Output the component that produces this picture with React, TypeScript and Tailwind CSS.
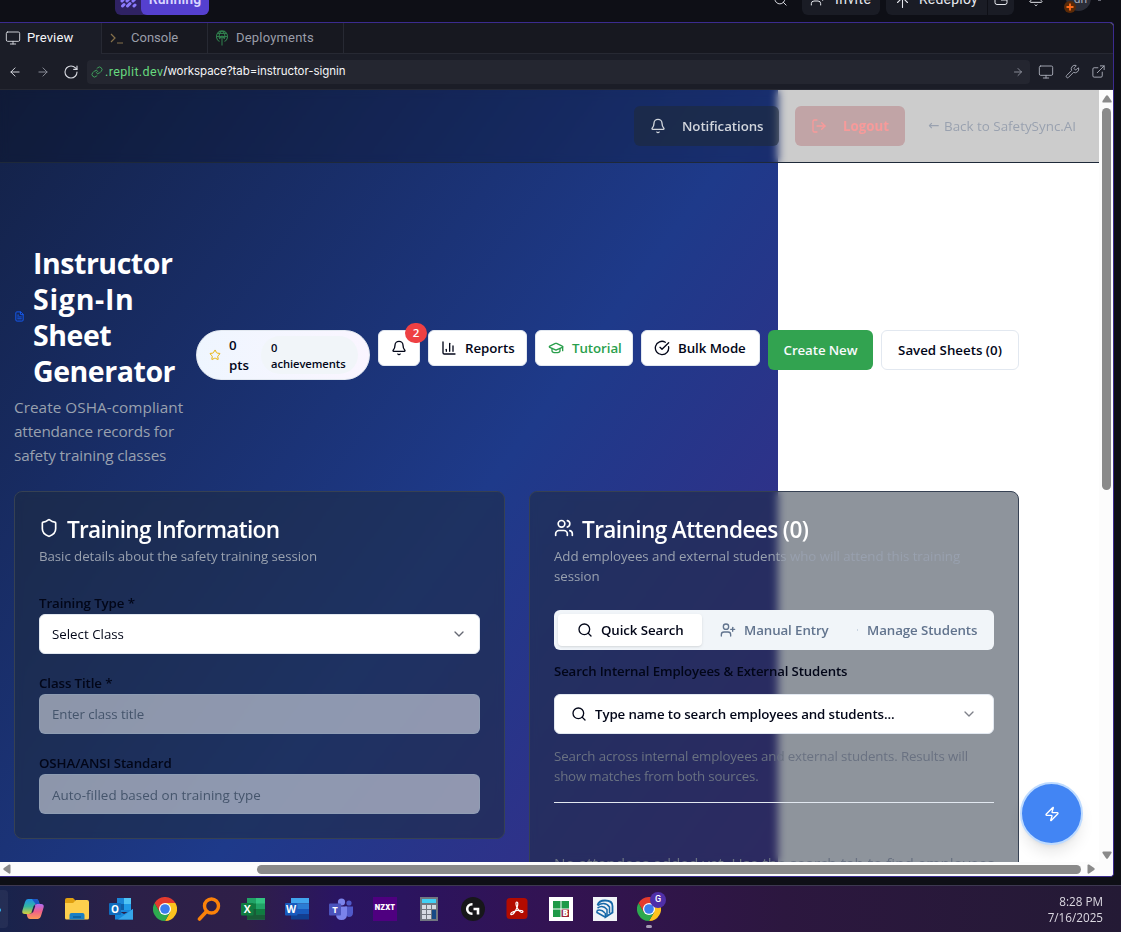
import React from "react";
import {
  ArrowLeft,
  ArrowRight,
  ArrowUp,
  Bell,
  ChartColumn,
  ChevronDown,
  CircleCheckBig,
  ExternalLink,
  FileText,
  GraduationCap,
  Link,
  LogOut,
  Monitor,
  RotateCw,
  Search,
  Shield,
  Star,
  UserPlus,
  Users,
  Wrench,
  Zap,
} from "lucide-react";

const BTN =
  "flex h-9 shrink-0 items-center rounded-md border border-slate-200 bg-white text-[13.3px] tracking-[-0.005em] font-semibold whitespace-nowrap";

function TopBar() {
  return (
    <div className="relative h-[22px] shrink-0 overflow-hidden bg-[#0e0f16] font-['Roboto',sans-serif] text-[14px] text-[#e6e8ee]">
      <div className="absolute top-[-17px] left-[115px] flex h-8 w-[94px] overflow-hidden rounded-md bg-[#2f2263]">
        <svg viewBox="0 0 26 32" className="h-8 w-[26px]">
          <g stroke="#8b7bff" strokeWidth="3" strokeLinecap="round">
            <path d="M7 18l1-1M12 18l2-2M18 18l2-2M7.500 23l1.500-1.500M12.500 23l2.500-2.500M19 23l1-1" />
          </g>
        </svg>
        <div className="flex flex-1 items-center justify-center rounded-l-md bg-[#5540cf] text-[14px] font-semibold tracking-[0.01em] text-[#d9d5ff]">
          Running
        </div>
      </div>
      <Search className="absolute top-[-8px] left-[773px] size-[15px]" strokeWidth={1.5} />
      <div className="absolute top-[-17px] left-[802px] flex h-8 w-[78px] items-center rounded-md bg-[#1a1c25] pl-2">
        <UserPlus className="size-4" strokeWidth={1.5} />
        <span className="ml-[9px] tracking-[0.03em]">Invite</span>
      </div>
      <div className="absolute top-[-17px] left-[886px] flex h-8 w-[101px] items-center rounded-l-md bg-[#1a1c25] pl-2">
        <ArrowUp className="relative top-[3px] size-[17px]" strokeWidth={1.5} />
        <span className="ml-2 tracking-[0.015em]">Redeploy</span>
      </div>
      <div className="absolute top-[-17px] left-[988px] flex h-8 w-[26px] items-center justify-center rounded-r-md bg-[#1a1c25]">
        <svg viewBox="0 0 14 14" className="size-[14px]" fill="none" stroke="currentColor">
          <rect x="1" y="1" width="12" height="11.5" rx="2" />
          <path d="M7 3v5h6" />
        </svg>
      </div>
      <Bell className="absolute top-[-9px] left-[1028px] size-4" strokeWidth={1.5} />
      <div className="absolute top-[-14px] left-[1066px] flex size-[25px] items-center justify-center rounded-full bg-[#2b2d38] text-[12px] text-[#a9acb8]">
        <span className="pl-1">dh</span>
      </div>
      <svg viewBox="0 0 12 12" className="absolute top-[1px] left-[1064px] size-3">
        <circle cx="6" cy="6" r="6" fill="#5a2a08" />
        <path d="M6 2.500v7M2.500 6h7" stroke="#ff6a1a" strokeWidth="1.800" />
      </svg>
      <div className="absolute top-[-1px] left-[1098px] h-[2px] w-[3px] bg-[#666873]" />
    </div>
  );
}

function DeployIcon() {
  return (
    <svg viewBox="0 0 14 16" className="h-4 w-[14px] text-[#2f7d4c]" fill="none" stroke="currentColor" strokeWidth="1.1">
      <path d="M4.500 11.500A5.600 5.600 0 1 1 9.500 11.500M4.800 9A6 6 0 0 1 7 1a6 6 0 0 1 2.200 8M1.500 6.500h11M2.500 3.500h9M7 6v9.500M4.500 8.500L7 6l2.500 2.500" />
    </svg>
  );
}

function BrowserChrome() {
  return (
    <div className="shrink-0 font-['Roboto',sans-serif]">
      <div className="flex h-[31px] bg-[#171820] text-[13px] text-[#9a9da8]">
        <div className="flex w-[102px] items-center border-r border-[#272933] bg-[#1b1d27] pb-px pl-[5px] text-[#f4f5f7]">
          <Monitor className="size-4 text-[#d5d7de]" strokeWidth={1.4} />
          <span className="ml-[6px] pb-px tracking-[0.01em]">Preview</span>
        </div>
        <div className="flex w-[106px] items-center border-r border-b border-[#272933] pl-2">
          <svg viewBox="0 0 14 12" className="h-3 w-[14px] text-[#86704a]" fill="none" stroke="currentColor" strokeWidth="1.2">
            <path d="M1 2l4 4-4 4M7 11h6" />
          </svg>
          <span className="ml-[7px]">Console</span>
        </div>
        <div className="flex w-[136px] items-center border-r border-b border-[#272933] pl-[7px]">
          <DeployIcon />
          <span className="ml-[7px] tracking-[0.015em]">Deployments</span>
        </div>
        <div className="flex-1 border-b border-[#272933]" />
      </div>
      <div className="flex h-[36px] items-center border-b border-[#272933] bg-[#1b1d27] pr-[7px] pl-2 text-[#d5d7de]">
        <ArrowLeft className="size-[14px]" strokeWidth={1.7} />
        <ArrowRight className="ml-[14px] size-[14px] text-[#8b8e99]" strokeWidth={1.7} />
        <RotateCw className="ml-[13px] size-4" strokeWidth={1.7} />
        <div className="ml-2 flex h-6 flex-1 items-center rounded bg-[#242630] pl-1 text-[12.5px]">
          <Link className="size-3 text-[#3f9f5c]" strokeWidth={2} />
          <span className="ml-[2px] pt-px tracking-[0.03em] text-[#67d97f]">.replit.dev</span>
          <span className="pt-px font-['Inter',sans-serif] text-[11.5px] tracking-[-0.005em] text-[#f4f5f7]">
            /workspace?tab=instructor-signin
          </span>
          <ArrowRight className="mr-[6px] ml-auto size-3 text-[#9a9da8]" strokeWidth={1.7} />
        </div>
        <Monitor className="ml-2 size-4 text-[#a9acb8]" strokeWidth={1.4} />
        <Wrench className="ml-[11px] size-[15px] text-[#a9acb8]" strokeWidth={1.5} />
        <ExternalLink className="ml-[11px] size-[15px] text-[#a9acb8]" strokeWidth={1.5} />
      </div>
    </div>
  );
}

function SiteHeader() {
  return (
    <div className="flex h-[73px] shrink-0 items-center border-b border-gray-800 bg-black/20 pl-[634px] backdrop-blur-[4px]">
      <div className="flex h-10 w-[145px] items-center rounded-md bg-gray-800/60 pl-4 text-[13.3px] font-semibold text-gray-300">
        <Bell className="size-4" />
        <span className="ml-4 pt-px tracking-[-0.005em]">Notifications</span>
      </div>
      <div className="ml-4 flex h-10 w-[110px] items-center rounded-md bg-[#c1a4a6] pl-4 text-[13.3px] font-bold text-[#f79a9a]">
        <LogOut className="size-4" />
        <span className="ml-4 pt-px">Logout</span>
      </div>
      <div className="ml-[23px] flex items-center pt-px text-[13.4px] whitespace-nowrap text-gray-400">
        <span className="w-4 font-['DejaVu_Sans',sans-serif]">←</span>
        <span>Back to SafetySync.AI</span>
      </div>
    </div>
  );
}

function TitleRow() {
  return (
    <div className="flex h-[223px] w-[1005px] shrink-0 items-center">
      <div className="w-[182px] shrink-0 self-start">
        <div className="flex items-center">
          <FileText className="relative top-[-1px] mr-2 size-[11px] shrink-0 text-blue-600" />
          <h1 className="text-[28.5px] leading-9 font-bold tracking-[-0.016em] text-white">
            Instructor
            <br />
            <span className="tracking-[0.025em]">Sign-In</span>
            <br />
            Sheet
            <br />
            Generator
          </h1>
        </div>
        <p className="mt-[6px] text-[15.3px] leading-6 whitespace-nowrap text-gray-400">
          <span className="tracking-[0.003em]">Create OSHA-compliant</span>
          <br />
          <span className="tracking-[-0.01em]">attendance records for</span>
          <br />
          <span className="tracking-[-0.01em]">safety training classes</span>
        </p>
      </div>
      <div className="mt-[-3px] flex items-start gap-2 text-slate-950">
        <div className="flex h-[50px] w-[174px] items-center rounded-full border border-slate-200 bg-linear-to-r from-blue-50 to-purple-50 pl-3">
          <Star className="size-3 text-[#eab308]" />
          <div className="ml-2 w-8 text-[13.3px] leading-5 font-semibold">
            0<br />
            pts
          </div>
          <div className="flex h-[38px] w-[97px] items-center rounded-full bg-slate-100 pt-px pl-[10px] text-[11.2px] leading-4 font-semibold tracking-[-0.005em]">
            <span>
              0<br />
              achievements
            </span>
          </div>
        </div>
        <div className={BTN + " relative w-[42px] justify-center"}>
          <Bell className="size-4" />
          <span className="absolute top-[-8px] right-[-8px] flex h-5 w-[22px] items-center justify-center rounded-full bg-[#ee4043] text-[11.5px] font-semibold text-white">
            2
          </span>
        </div>
        <div className={BTN + " w-[99px] pl-3"}>
          <ChartColumn className="mr-2 size-4" />
          <span className="pt-px">Reports</span>
        </div>
        <div className={BTN + " w-[98px] pl-3 text-[#2a9f4c]"}>
          <GraduationCap className="mr-2 size-4" />
          <span className="pt-px">Tutorial</span>
        </div>
        <div className={BTN + " w-[119px] pl-3"}>
          <CircleCheckBig className="mr-2 size-4" />
          <span className="pt-px">Bulk Mode</span>
        </div>
        <div className="flex h-10 w-[105px] items-center justify-center rounded-md bg-[#32a350] pt-[2px] text-[13.3px] font-semibold tracking-[-0.008em] whitespace-nowrap text-slate-50">
          Create New
        </div>
        <div className="flex h-10 w-[138px] items-center justify-center rounded-md border border-slate-200 bg-white pt-[2px] text-[13.3px] font-semibold whitespace-nowrap">
          Saved Sheets (0)
        </div>
      </div>
    </div>
  );
}

function Field({ label, children }: { label: string; children: React.ReactNode }) {
  return (
    <div className="h-20">
      <div className="flex h-[21px] items-center pt-px text-[13.3px] font-semibold tracking-[-0.008em] text-slate-950">{label}</div>
      {children}
    </div>
  );
}

function TrainingInformation() {
  return (
    <section className="h-[348px] w-[491px] shrink-0 rounded-lg border border-gray-700 bg-gray-800/50 px-6 pt-[25px] backdrop-blur-[4px]">
      <h2 className="flex h-6 items-center text-[22.6px] font-semibold tracking-[-0.031em] text-white">
        <Shield className="relative top-[-1px] mr-2 size-5" />
        <span className="relative top-px">Training Information</span>
      </h2>
      <p className="mt-[5px] text-[13.3px] leading-5 tracking-[-0.005em] text-gray-400">
        Basic details about the safety training session
      </p>
      <div className="mt-[27px]">
        <Field label="Training Type *">
          <div className="flex h-10 items-center justify-between rounded-md border border-slate-200 bg-white px-3 text-[13.3px] text-slate-950">
            <span className="pt-[2px]">Select Class</span>
            <ChevronDown className="size-4 opacity-60" />
          </div>
        </Field>
        <Field label="Class Title *">
          <div className="flex h-10 items-center rounded-md border border-slate-400/60 bg-white/50 px-3 pt-[2px] text-[13.3px] tracking-[-0.006em] text-slate-600">
            Enter class title
          </div>
        </Field>
        <Field label="OSHA/ANSI Standard">
          <div className="flex h-10 items-center rounded-md border border-slate-400/60 bg-white/50 px-3 pt-[2px] text-[13.4px] tracking-[0.003em] text-slate-600">
            Auto-filled based on training type
          </div>
        </Field>
      </div>
    </section>
  );
}

function TrainingAttendees() {
  return (
    <section className="h-[480px] w-[490px] shrink-0 rounded-lg border border-gray-700 bg-gray-800/50 px-6 pt-[25px] backdrop-blur-[4px]">
      <h2 className="flex h-6 items-center text-[22.6px] font-semibold tracking-[-0.027em] whitespace-nowrap text-white">
        <Users className="relative top-[-1px] mr-2 size-5" />
        <span className="relative top-px">Training Attendees (0)</span>
      </h2>
      <p className="mt-[5px] text-[13.3px] leading-5 tracking-[-0.004em] whitespace-nowrap text-gray-400">
        Add employees and external students who will attend this training
        <br />
        session
      </p>
      <div className="mt-6 flex h-10 items-center rounded-md bg-slate-100 p-1 text-[13.3px] font-semibold tracking-[-0.007em] whitespace-nowrap text-slate-500">
        <div className="flex h-8 w-[144px] items-center rounded bg-white pl-[19px] text-slate-950 shadow-sm">
          <Search className="mr-2 size-4" />
          <span className="pt-[2px]">Quick Search</span>
        </div>
        <div className="flex w-[157px] items-center pl-[18px]">
          <UserPlus className="mr-2 size-4" />
          <span className="pt-[2px]">Manual Entry</span>
        </div>
        <div className="mr-[9px] ml-[-2px] h-[2px] w-px bg-slate-300" />
        <span className="pt-[2px]">Manage Students</span>
      </div>
      <div className="mt-[11px] text-[13.2px] leading-5 font-semibold tracking-[-0.009em] text-slate-950">
        Search Internal Employees &amp; External Students
      </div>
      <div className="mt-[13px] flex h-10 items-center rounded-md border border-slate-200 bg-white px-4 text-[13.3px] font-semibold tracking-[-0.009em] text-slate-950">
        <Search className="mr-2 size-4" />
        <span className="pt-[2px]">Type name to search employees and students...</span>
        <ChevronDown className="ml-auto size-4 opacity-50" />
      </div>
      <p className="mt-3 text-[13.3px] leading-5 tracking-[-0.009em] whitespace-nowrap text-gray-500">
        Search across internal employees and external students. Results will
        <br />
        <span className="tracking-[-0.014em]">show matches from both sources.</span>
      </p>
      <div className="mt-4 h-px bg-slate-200" />
      <p className="mt-[48px] text-[15.3px] leading-6 tracking-[-0.003em] whitespace-nowrap text-gray-500">
        No attendees added yet. Use the search tab to find employees
      </p>
    </section>
  );
}

function Page() {
  return (
    <div className="relative h-[772px] w-[1099px] overflow-hidden bg-white font-['Open_Sans','Noto_Sans',sans-serif]">
      <div className="absolute top-0 left-[-321px] h-[1500px] w-[1099px] bg-[linear-gradient(to_bottom_right,#0f172a,#1e3a8a,#581c87)]" />
      <div className="relative flex flex-col">
        <SiteHeader />
        <div className="flex flex-col pt-[82px] pl-[14px]">
          <TitleRow />
          <div className="mt-[23px] flex items-start gap-6">
            <TrainingInformation />
            <TrainingAttendees />
          </div>
        </div>
      </div>
      <div className="absolute top-[692px] left-[1020px] flex size-[63px] items-center justify-center rounded-full border-2 border-blue-200 bg-[#4285f4] text-white shadow-lg">
        <Zap className="size-4" />
      </div>
    </div>
  );
}

function VerticalScrollbar() {
  return (
    <div className="flex w-[14px] flex-col items-center bg-[#fcfcfc]">
      <svg viewBox="0 0 10 8" className="mt-[5px] ml-px h-2 w-[10px]">
        <path d="M4 .8q1-1 2 0l3.500 5.200q.5 1.500-1 1.500h-7q-1.500 0-1-1.500z" fill="#8a8a8a" />
      </svg>
      <div className="mt-[5px] ml-px h-[382px] w-[9px] rounded-full bg-[#8a8a8a]" />
      <svg viewBox="0 0 10 8" className="mt-auto mb-[3px] ml-px h-2 w-[10px]">
        <path d="M4 7.200q1 1 2 0l3.500-5.200q.5-1.500-1-1.500h-7q-1.500 0-1 1.500z" fill="#8a8a8a" />
      </svg>
    </div>
  );
}

function HorizontalScrollbar() {
  return (
    <div className="flex h-[14px] items-center bg-[#fcfcfc] pl-[3px]">
      <svg viewBox="0 0 8 10" className="h-[10px] w-2">
        <path d="M.8 4q-1 1 0 2l5.200 3.500q1.500.5 1.500-1v-7q0-1.500-1.500-1z" fill="#8a8a8a" />
      </svg>
      <div className="ml-[246px] h-[9px] w-[824px] rounded-full bg-[#8a8a8a]" />
      <svg viewBox="0 0 8 10" className="ml-[6px] h-[10px] w-2">
        <path d="M7.200 4q1 1 0 2l-5.200 3.500q-1.500.5-1.500-1v-7q0-1.500 1.500-1z" fill="#8a8a8a" />
      </svg>
    </div>
  );
}

function ChromeLogo() {
  return (
    <svg viewBox="0 0 24 24" className="size-6">
      <path d="M12 6h10.400A12 12 0 0 1 12 24l5.200-9z" fill="#fcc31e" />
      <path d="M6.800 15L1.600 6A12 12 0 0 0 12 24l5.200-9z" fill="#2da94f" />
      <path d="M1.600 6A12 12 0 0 1 22.400 6H12L6.800 15z" fill="#e33b2e" />
      <circle cx="12" cy="12" r="6" fill="#fff" />
      <circle cx="12" cy="12" r="4.800" fill="#3b7ded" />
    </svg>
  );
}

function CopilotLogo() {
  return (
    <svg viewBox="0 0 24 24" className="size-6">
      <defs>
        <linearGradient id="cpA" x1="0" y1="0" x2="0" y2="1">
          <stop offset="0" stopColor="#1d8fe8" />
          <stop offset=".5" stopColor="#35b6a0" />
          <stop offset="1" stopColor="#d8cf3a" />
        </linearGradient>
        <linearGradient id="cpB" x1="0" y1="0" x2="0" y2="1">
          <stop offset="0" stopColor="#b06cf2" />
          <stop offset=".5" stopColor="#f0608a" />
          <stop offset="1" stopColor="#fb9a56" />
        </linearGradient>
      </defs>
      <path d="M7 2h8q2 0 2.600 2l1 3h-3q-2 0-2.600 2l-2 6q-.8 2-3 2H4q-3.500 0-2.600-3.500L4 5q.8-3 3-3z" fill="url(#cpA)" />
      <path d="M11 2h4q2 0 2.600 2l1 3h-4z" fill="#1e55c8" />
      <path d="M17 22H9q-2 0-2.600-2l-.8-3h3q2 0 2.600-2l2-6q.8-2 3-2H20q3.500 0 2.600 3.500L20 19q-.8 3-3 3z" fill="url(#cpB)" />
      <path d="M13.700 8.500l-2.500 7" stroke="#22204a" strokeWidth="1.500" />
    </svg>
  );
}

function FolderLogo() {
  return (
    <svg viewBox="0 0 24 24" className="size-6">
      <path d="M0 3q0-2 2-2h6l3 3v6H0z" fill="#e0a010" />
      <path d="M0 6h8l3-3h11q2 0 2 2v16q0 1.500-1.500 1.500h-21Q0 22.500 0 21z" fill="#fdcf4d" />
      <path d="M4.500 22.500V18q0-2 2-2h11q2 0 2 2v4.500z" fill="#1a7fc4" />
      <path d="M8 20h8" stroke="#0d5c97" strokeWidth="1.500" />
    </svg>
  );
}

function OutlookLogo() {
  return (
    <svg viewBox="0 0 24 24" className="size-6">
      <path d="M8 1h14v14H8z" fill="#1a86d8" />
      <path d="M15 1h7v6h-7z" fill="#50c4f5" />
      <path d="M8 7h7v6H8z" fill="#0f5fa8" />
      <path d="M15 7h7v6h-7z" fill="#1f9ae8" />
      <path d="M6 12l9 5 9-5v10.500H6z" fill="#1687d9" />
      <path d="M24 12L9 22.500h15z" fill="#36a6ea" />
      <rect y="6" width="12" height="12" rx="1" fill="#0f6cbd" />
      <text x="6" y="15.700" textAnchor="middle" fontSize="10" fontWeight="700" fill="#fff" fontFamily="Open Sans">O</text>
    </svg>
  );
}

function MagnifierLogo() {
  return (
    <svg viewBox="0 0 24 24" className="size-6" fill="none" stroke="#fb8209" strokeLinecap="round">
      <circle cx="14.500" cy="9" r="7" strokeWidth="3.400" />
      <path d="M9 15l-6.500 7" strokeWidth="3.600" />
    </svg>
  );
}

function ExcelLogo() {
  return (
    <svg viewBox="0 0 24 24" className="size-6">
      <path d="M6 1h18v21.500H6z" fill="#21a366" />
      <path d="M15 1h9v5.500h-9z" fill="#33c481" />
      <path d="M6 6.500h9V12H6z" fill="#107c41" />
      <path d="M6 12h9v10.500H6z" fill="#185c37" />
      <path d="M15 12h9v5.500h-9z" fill="#107c41" />
      <path d="M15 17.500h9v5h-9z" fill="#185c37" />
      <rect y="6" width="12.500" height="12.500" rx="1" fill="#107c41" />
      <text x="6.200" y="16" textAnchor="middle" fontSize="10.500" fontWeight="700" fill="#fff" fontFamily="Open Sans">X</text>
    </svg>
  );
}

function WordLogo() {
  return (
    <svg viewBox="0 0 24 24" className="size-6">
      <path d="M6 1h18v5.500H6z" fill="#41a5ee" />
      <path d="M6 6.500h18V12H6z" fill="#2b7cd3" />
      <path d="M6 12h18v5.500H6z" fill="#185abd" />
      <path d="M6 17.500h18v5H6z" fill="#103f91" />
      <rect y="6" width="12.500" height="12.500" rx="1" fill="#185abd" />
      <text x="6.200" y="16" textAnchor="middle" fontSize="10.500" fontWeight="700" fill="#fff" fontFamily="Open Sans">W</text>
    </svg>
  );
}

function TeamsLogo() {
  return (
    <svg viewBox="0 0 24 24" className="size-6">
      <circle cx="20" cy="6" r="2.600" fill="#5059c9" />
      <path d="M16 9.500h8v6q0 4.500-4.500 4.500L16 18z" fill="#5059c9" />
      <circle cx="12.500" cy="5" r="3.600" fill="#7b83eb" />
      <path d="M7 9.500h11v7.500q0 6-5.500 6T7 17z" fill="#7b83eb" />
      <rect y="6.500" width="12" height="12" rx="1" fill="#4b53bc" />
      <text x="6" y="16" textAnchor="middle" fontSize="9.500" fontWeight="700" fill="#fff" fontFamily="Open Sans">T</text>
    </svg>
  );
}

function NzxtLogo() {
  return (
    <div className="flex size-6 items-center justify-center bg-[#4f0080] font-['Inter',sans-serif] text-[7px] font-black text-white">
      NZXT
    </div>
  );
}

function CalculatorLogo() {
  return (
    <svg viewBox="0 0 24 24" className="size-6">
      <path d="M3 0h18v24H3z" fill="#717780" />
      <path d="M5 2h14v4H5z" fill="#3fd0f5" />
      <g fill="#d5dae2">
        <path d="M5 8h4v4H5zM10 8h4v4h-4zM15 8h4v4h-4zM5 13h4v4H5zM10 13h4v4h-4zM5 18h4v4H5zM10 18h4v4h-4z" />
      </g>
      <path d="M15 13h4v9h-4z" fill="#164a86" />
    </svg>
  );
}

function LogitechLogo() {
  return (
    <svg viewBox="0 0 24 24" className="size-6">
      <circle cx="12" cy="12" r="12" fill="#17171a" />
      <path d="M11.500 7.200H11a4.800 4.800 0 0 0 0 9.600h.5M12.500 12h4.500v5.500" fill="none" stroke="#fff" strokeWidth="2.600" />
    </svg>
  );
}

function AcrobatLogo() {
  return (
    <svg viewBox="0 0 24 24" className="size-6">
      <rect x="1.500" y="1" width="21" height="21" rx="3.500" fill="#b30b00" />
      <path
        d="M12 10.500c-1-2-1.600-5.500-.2-5.500s1.200 3 .2 5.500-3 6.500-5 7-1.500-1.500.5-2.500 6.500-2 9-1.500 1.500 2.500-.5 1.700-3-2.200-4-4.700z"
        fill="none"
        stroke="#fff"
        strokeWidth="1.200"
      />
    </svg>
  );
}

function BluebeamLogo() {
  return (
    <svg viewBox="0 0 24 24" className="size-6">
      <path d="M0 0h24v24H0z" fill="#fff" />
      <path d="M4 4h7.500v7.500H4zM12.500 4H20v7.500h-7.500zM4 12.500h7.500V20H4z" fill="#1f9a48" />
      <path d="M12.500 12.500H20V20h-7.500z" fill="#9b2335" />
      <text x="16.300" y="19.300" textAnchor="middle" fontSize="8.500" fontWeight="800" fill="#fff" fontFamily="Open Sans">B</text>
    </svg>
  );
}

function SketchupLogo() {
  return (
    <svg viewBox="0 0 24 24" className="size-6">
      <path d="M0 0h24v24H0z" fill="#f1f3f7" />
      <g fill="none" stroke="#1668a8">
        <path d="M4.500 8q1.500-4.500 7.500-4.500 7.500 0 7.500 5.500v6.500l-7 4.500v-4" strokeWidth="1.800" />
        <path d="M4.500 8.500q7.500-4.500 12 1.500v6" strokeWidth="1.500" />
        <path d="M4.500 11q5.500-3.500 9.500 1.500v5.500" strokeWidth="1.500" />
        <path d="M4 13.500q4.500-1.500 8 2.500M4 13.500v2l8 4.500" strokeWidth="1.500" />
      </g>
    </svg>
  );
}

function ChromeProfile() {
  return (
    <div className="relative size-6">
      <ChromeLogo />
      <div className="absolute top-[-5px] left-[13px] flex size-4 items-center justify-center rounded-full bg-[#4f2fa8] font-['Roboto',sans-serif] text-[9px] font-medium text-white">
        G
      </div>
      <div className="absolute top-[28px] left-[9px] h-[3px] w-[6px] rounded-full bg-[#a79cb5]" />
    </div>
  );
}

function Taskbar() {
  return (
    <div className="relative flex h-[47px] items-center overflow-hidden border-t border-[#3d3850] bg-[linear-gradient(90deg,#18234c_0%,#2a2048_10%,#2f1f48_22%,#2a1562_30%,#2b145f_36%,#331352_50%,#2c173f_70%,#241a35_100%)] font-['Open_Sans',sans-serif]">
      <div className="h-[38px] w-2 rounded-r bg-white/5" />
      <div className="absolute top-[22px] left-[-3px] size-1 rounded-full bg-[#35b4f0]" />
      <div className="ml-[13px] flex items-center gap-5 pb-px">
        <CopilotLogo />
        <FolderLogo />
        <OutlookLogo />
        <ChromeLogo />
        <MagnifierLogo />
        <ExcelLogo />
        <WordLogo />
        <TeamsLogo />
        <NzxtLogo />
        <CalculatorLogo />
        <LogitechLogo />
        <AcrobatLogo />
        <BluebeamLogo />
        <SketchupLogo />
        <ChromeProfile />
      </div>
      <div className="mr-[18px] ml-auto pb-px text-right text-[11.7px] leading-4 text-[#dcd9e2]">
        8:28 PM
        <br />
        7/16/2025
      </div>
    </div>
  );
}

export default function App() {
  return (
    <div className="flex h-[932px] w-[1121px] flex-col overflow-hidden bg-[#0e0f16]">
      <TopBar />
      <div className="flex h-[855px] w-[1114px] flex-col overflow-hidden rounded-r border-t border-r border-b border-[#3b2b8f] bg-[#fcfcfc]">
        <BrowserChrome />
        <div className="flex">
          <Page />
          <VerticalScrollbar />
        </div>
        <HorizontalScrollbar />
      </div>
      <div className="h-2 shrink-0" />
      <Taskbar />
    </div>
  );
}
